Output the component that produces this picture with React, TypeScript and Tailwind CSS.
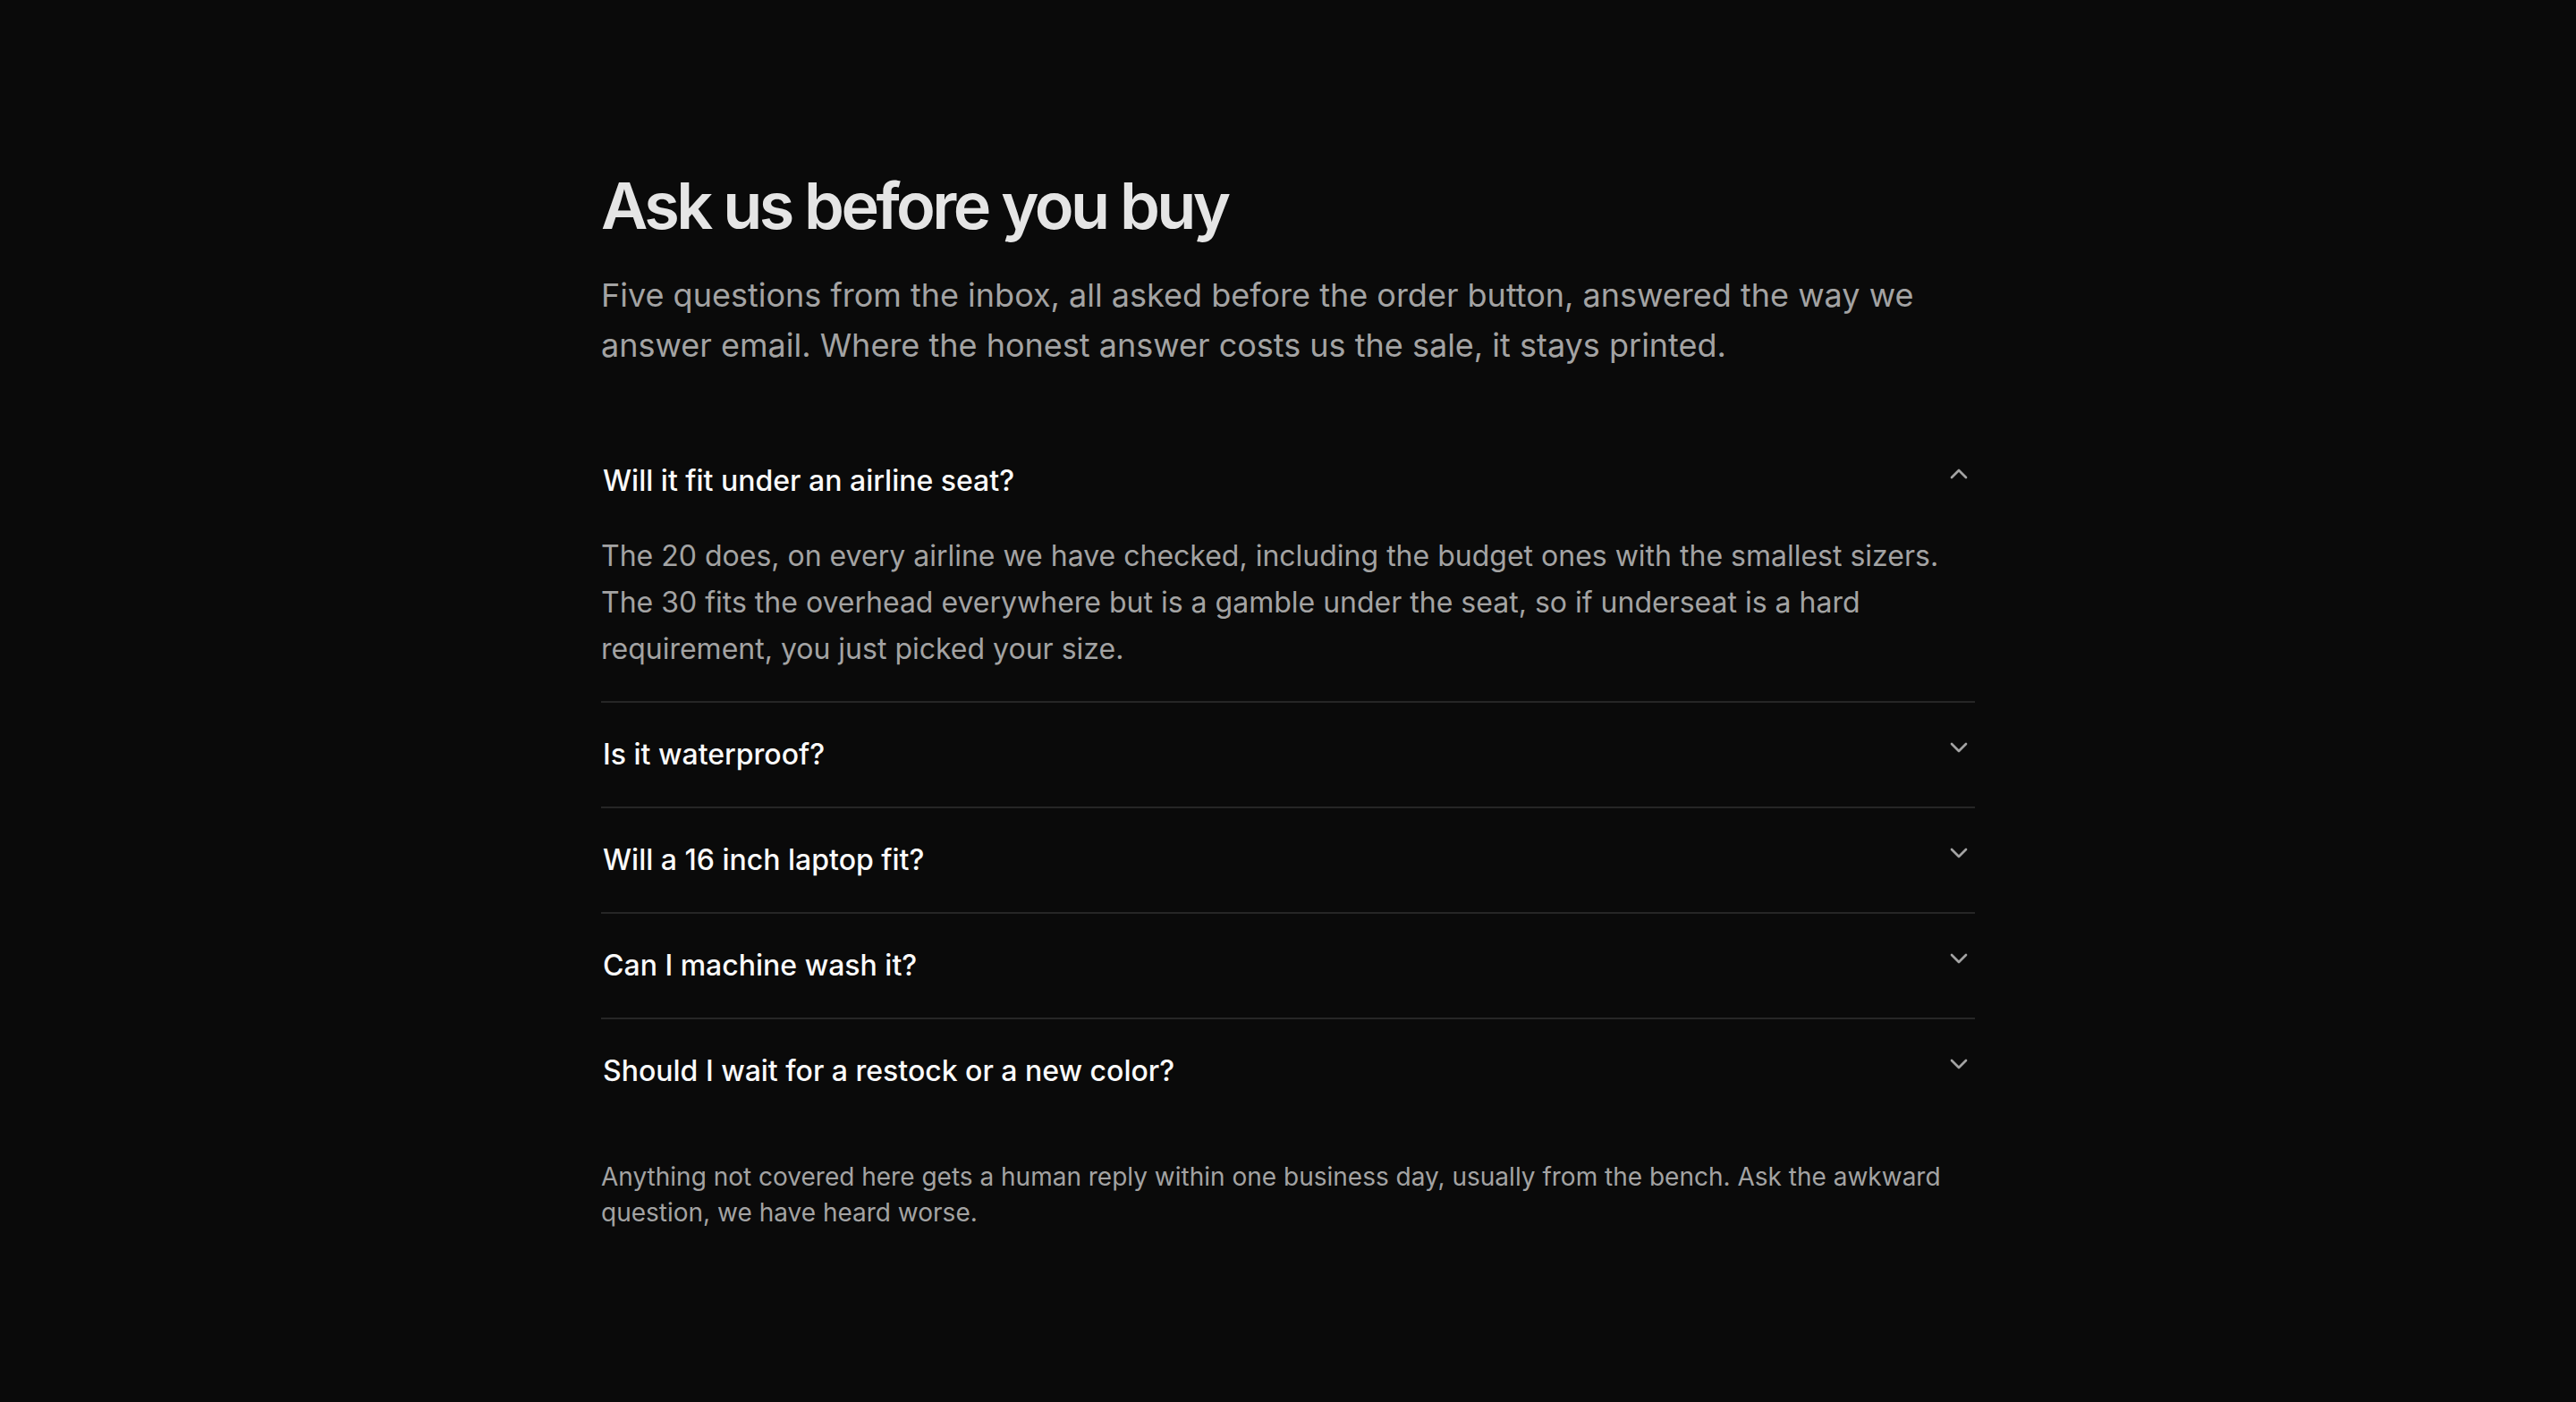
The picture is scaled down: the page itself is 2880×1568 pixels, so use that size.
import { useState } from 'react';
import { ChevronDown } from 'lucide-react';

const faqs = [
    {
        q: 'Will it fit under an airline seat?',
        a: 'The 20 does, on every airline we have checked, including the budget ones with the smallest sizers. The 30 fits the overhead everywhere but is a gamble under the seat, so if underseat is a hard requirement, you just picked your size.',
    },
    {
        q: 'Is it waterproof?',
        a: 'Water resistant. The shell sheds a downpour on the walk to the gate, but the zips are not sealed, so do not leave it sitting in a puddle.',
    },
    {
        q: 'Will a 16 inch laptop fit?',
        a: 'Yes, in the back sleeve, with room for a thin case. Anything bigger than 16 inches will not close cleanly.',
    },
    {
        q: 'Can I machine wash it?',
        a: 'Please do not. Spot clean with warm water and mild soap, then let it air dry with the zips open.',
    },
    {
        q: 'Should I wait for a restock or a new color?',
        a: 'If your color is in stock, buy it now. Restocks take months and new colors are not on the calendar yet.',
    },
];

export default function App() {
    const [open, setOpen] = useState<number | null>(0);

    return (
        <div className="min-h-screen bg-[#0a0a0a] font-['Inter',sans-serif] antialiased">
            <div className="mx-auto w-[1536px] pt-[190px] pb-[192px]">
                {/* Header */}
                <h1 className="text-[72px] leading-[80px] font-semibold tracking-[-0.05em] text-[#e5e5e5]">
                    Ask us before you buy
                </h1>
                <p className="mt-[32px] max-w-[1500px] text-[36px] leading-[56px] text-[#a3a3a3]">
                    Five questions from the inbox, all asked before the order button, answered the way we
                    answer email. Where the honest answer costs us the sale, it stays printed.
                </p>

                {/* Questions */}
                <div className="mt-[66px] flex flex-col">
                    {faqs.map((item, i) => {
                        const isOpen = open === i;
                        return (
                            <div key={item.q} className={i > 0 ? 'border-t-2 border-[#262626]' : ''}>
                                <button
                                    onClick={() => setOpen(isOpen ? null : i)}
                                    className="flex w-full items-start justify-between gap-8 py-[32px] pl-[2px] text-left"
                                >
                                    <span className="text-[32px] leading-[52px] font-medium text-[#fafafa]">
                                        {item.q}
                                    </span>
                                    <ChevronDown
                                        strokeWidth={2}
                                        className={`mt-[2px] mr-[2px] h-[32px] w-[32px] shrink-0 text-[#a3a3a3] ${isOpen ? 'rotate-180' : ''}`}
                                    />
                                </button>
                                {isOpen && (
                                    <div className="pb-[32px] pr-[40px] text-[32px] leading-[52px] text-[#a3a3a3]">
                                        {item.a}
                                    </div>
                                )}
                            </div>
                        );
                    })}
                </div>

                {/* Footnote */}
                <p className="mt-[40px] text-[28px] leading-[40px] text-[#a3a3a3]">
                    Anything not covered here gets a human reply within one business day, usually from the bench. Ask the awkward
                    question, we have heard worse.
                </p>
            </div>
        </div>
    );
}
